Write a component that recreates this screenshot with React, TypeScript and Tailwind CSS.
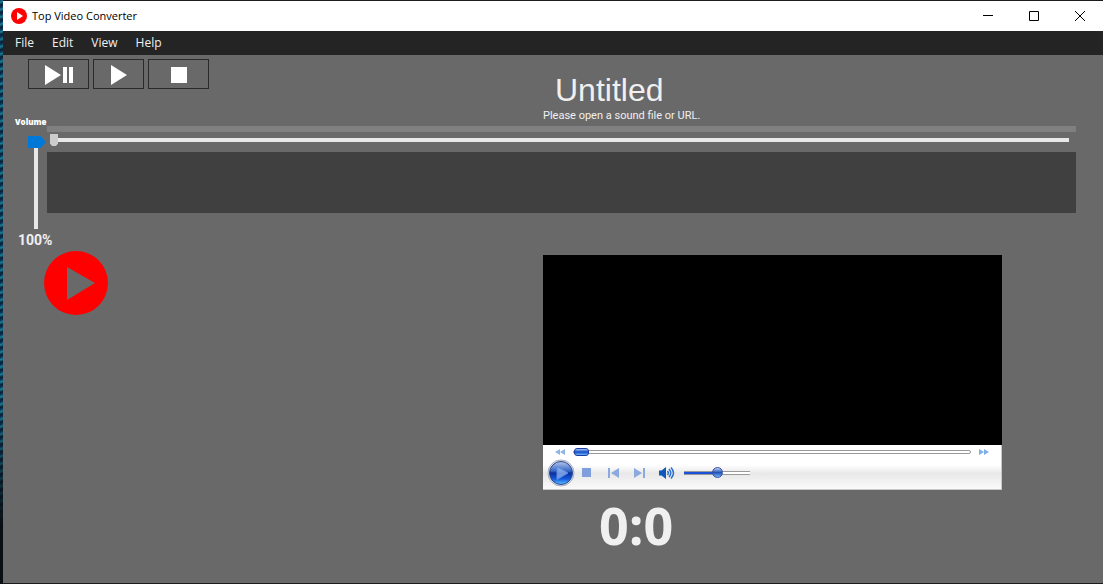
import { useState } from "react";
import type { ReactNode } from "react";

const MENU = ["File", "Edit", "View", "Help"];

export default function App() {
  return (
    <div className="flex min-h-screen flex-col bg-[#1c1c1c] bg-[linear-gradient(to_bottom,transparent_70%,#0a0f14_90%),repeating-linear-gradient(160deg,#0b2a4a_0px,#1b7f98_2px,#071a30_5px,#0d3c63_7px)] font-['Open_Sans',sans-serif]">
      <div className="ml-[3px] flex flex-1 flex-col border-y border-[#1c1c1c] bg-[#696969]">
        <TitleBar />
        <MenuBar />
        <main className="flex flex-1 flex-col">
          <Header />
          <Tracks />
          <Stage />
        </main>
      </div>
    </div>
  );
}

function TitleBar() {
  return (
    <header className="flex h-[30px] items-center bg-white pl-2 text-black">
      <svg className="h-4 w-4" viewBox="0 0 16 16">
        <circle cx="8" cy="8" r="8" fill="#f00" />
        <path d="M6 4l6 4-6 4z" fill="#fff" />
      </svg>
      <h1 className="ml-[5px] flex-1 text-[11px]">Top Video Converter</h1>
      <WindowButton label="Minimize">
        <path d="M0 4.5h10" />
      </WindowButton>
      <WindowButton label="Maximize">
        <path d="M.5 .5h9v9h-9z" />
      </WindowButton>
      <WindowButton label="Close">
        <path d="M0 0l10 10M10 0L0 10" />
      </WindowButton>
    </header>
  );
}

function WindowButton({ label, children }: { label: string; children: ReactNode }) {
  return (
    <button
      type="button"
      aria-label={label}
      className="flex h-full w-[46px] items-center justify-center pb-px hover:bg-gray-200"
    >
      <svg className="h-[10px] w-[10px]" viewBox="0 0 10 10" fill="none" stroke="#000">
        {children}
      </svg>
    </button>
  );
}

function MenuBar() {
  return (
    <nav className="flex h-6 items-center gap-[18px] bg-[#242424] pl-3 text-[12px] text-[#f0f0f0]">
      {MENU.map((item) => (
        <button key={item} type="button" className="hover:underline">
          {item}
        </button>
      ))}
    </nav>
  );
}

function Header() {
  return (
    <div className="flex h-[71px]">
      <div className="flex w-[540px] shrink-0 flex-col justify-between pt-1">
        <div className="flex h-[30px] gap-1 pl-[25px]">
          <button
            type="button"
            aria-label="Play or pause"
            className="flex w-[61px] items-center justify-center border border-[#2a2a2a] pt-0.5 hover:bg-[#777]"
          >
            <svg className="h-5 w-7" viewBox="0 0 28 20" fill="#fff">
              <path d="M0 0l16 10L0 20zM18 2h4v16h-4zM24 2h4v16h-4z" />
            </svg>
          </button>
          <button
            type="button"
            aria-label="Play"
            className="flex w-[51px] items-center justify-center border border-[#2a2a2a] pt-0.5 hover:bg-[#777]"
          >
            <svg className="h-5 w-4" viewBox="0 0 16 20" fill="#fff">
              <path d="M0 0l16 10L0 20z" />
            </svg>
          </button>
          <button
            type="button"
            aria-label="Stop"
            className="flex w-[61px] items-center justify-center border border-[#2a2a2a] pt-0.5 hover:bg-[#777]"
          >
            <span className="h-4 w-4 bg-white" />
          </button>
        </div>
        <label htmlFor="volume" className="pl-3 text-[8px] leading-[9px] font-extrabold text-white">
          Volume
        </label>
      </div>
      <div className="flex-1 pt-4 text-[#f0f0f0]">
        <h2 className="pl-3 font-['Liberation_Sans',sans-serif] text-[32px] leading-[38px]">
          Untitled
        </h2>
        <p className="font-['Roboto',sans-serif] text-[11px] leading-[14px]">
          Please open a sound file or URL.
        </p>
      </div>
    </div>
  );
}

function Tracks() {
  const [volume, setVolume] = useState(100);

  return (
    <div className="flex pr-[27px]">
      <div className="w-[44px] shrink-0 pt-[10px]">
        <input
          id="volume"
          type="range"
          value={volume}
          onChange={(e) => setVolume(Number(e.target.value))}
          className="ml-6 block h-[93px] w-[18px] appearance-none bg-transparent [direction:rtl] [writing-mode:vertical-lr] [&::-webkit-slider-runnable-track]:h-full [&::-webkit-slider-runnable-track]:w-1 [&::-webkit-slider-runnable-track]:bg-[#e8e8e8] [&::-webkit-slider-thumb]:ml-[-6px] [&::-webkit-slider-thumb]:h-3 [&::-webkit-slider-thumb]:w-[18px] [&::-webkit-slider-thumb]:appearance-none [&::-webkit-slider-thumb]:bg-[#0078d7] [&::-webkit-slider-thumb]:[clip-path:polygon(0_0,70%_0,100%_50%,70%_100%,0_100%)]"
        />
        <output
          htmlFor="volume"
          className="block pt-[3px] pl-[15px] font-['Roboto',sans-serif] text-[14px] leading-4 font-bold text-[#f0f0f0]"
        >
          {volume}%
        </output>
      </div>
      <div className="min-w-0 flex-1">
        <div className="h-[6px] bg-[#808080]" />
        <div className="mt-0.5 mb-[6px] pr-[7px] pl-[3px]">
          <input
            type="range"
            aria-label="Position"
            defaultValue={0}
            className="block h-3 w-full appearance-none bg-transparent [&::-webkit-slider-runnable-track]:h-1 [&::-webkit-slider-runnable-track]:bg-[#e8e8e8] [&::-webkit-slider-thumb]:mt-[-4px] [&::-webkit-slider-thumb]:h-3 [&::-webkit-slider-thumb]:w-2 [&::-webkit-slider-thumb]:appearance-none [&::-webkit-slider-thumb]:bg-[#ccc] [&::-webkit-slider-thumb]:[clip-path:polygon(0_0,100%_0,100%_80%,75%_100%,25%_100%,0_80%)]"
          />
        </div>
        <div className="h-[61px] bg-[#404040]" />
      </div>
    </div>
  );
}

function Stage() {
  return (
    <div className="flex pt-[3px]">
      <div className="w-[540px] shrink-0 pl-[41px]">
        <svg className="h-16 w-16" viewBox="0 0 64 64" fill="#f00">
          <path fillRule="evenodd" d="M32 0a32 32 0 1 0 0 64a32 32 0 1 0 0-64zM23 16l28 16-28 17z" />
        </svg>
      </div>
      <div className="mr-[101px] min-w-0 flex-1 pt-1">
        <Player />
        <p className="pt-1 pl-14 text-[52px] leading-[62px] font-bold text-[#f0f0f0]">0:0</p>
      </div>
    </div>
  );
}

function Player() {
  return (
    <section aria-label="Video player">
      <div className="h-[190px] bg-black" />
      <div className="flex h-[45px] flex-col border-r border-b border-[#c8c8c8] bg-linear-to-b from-white from-45% via-[#e8e8e8] via-65% to-[#fafafa]">
        <div className="flex h-[14px] shrink-0 items-center gap-2 pr-3 pl-3">
          <button type="button" aria-label="Rewind">
            <svg className="h-[6px] w-[10px]" viewBox="0 0 10 6" fill="#8fb4e6">
              <path d="M5 0v6L0 3zM10 0v6L5 3z" />
            </svg>
          </button>
          <input
            type="range"
            aria-label="Seek"
            defaultValue={0}
            className="block h-2 min-w-0 flex-1 appearance-none bg-transparent [&::-webkit-slider-runnable-track]:h-1 [&::-webkit-slider-runnable-track]:rounded-xs [&::-webkit-slider-runnable-track]:border [&::-webkit-slider-runnable-track]:border-[#999] [&::-webkit-slider-runnable-track]:bg-white [&::-webkit-slider-thumb]:mt-[-3px] [&::-webkit-slider-thumb]:h-2 [&::-webkit-slider-thumb]:w-[15px] [&::-webkit-slider-thumb]:appearance-none [&::-webkit-slider-thumb]:rounded-[3px] [&::-webkit-slider-thumb]:border [&::-webkit-slider-thumb]:border-[#1a3fa0] [&::-webkit-slider-thumb]:bg-linear-to-b [&::-webkit-slider-thumb]:from-[#a9c4f2] [&::-webkit-slider-thumb]:via-[#1448c8] [&::-webkit-slider-thumb]:to-[#6fb4f8]"
          />
          <button type="button" aria-label="Fast forward">
            <svg className="h-[6px] w-[10px]" viewBox="0 0 10 6" fill="#7fade8">
              <path d="M0 0l5 3-5 3zM5 0l5 3-5 3z" />
            </svg>
          </button>
        </div>
        <div className="flex h-[27px] items-center pl-1">
          <button type="button" aria-label="Play">
            <svg className="h-[28px] w-[28px]" viewBox="0 0 28 28">
              <defs>
                <linearGradient id="orb" x1="0" y1="0" x2="0" y2="1">
                  <stop offset="0" stopColor="#b4c6ea" />
                  <stop offset=".42" stopColor="#3566c4" />
                  <stop offset=".5" stopColor="#0b2f9c" />
                  <stop offset=".75" stopColor="#1257dc" />
                  <stop offset="1" stopColor="#5fc4ff" />
                </linearGradient>
              </defs>
              <circle cx="14" cy="14" r="13" fill="#e8ecf5" stroke="#a9adbd" />
              <circle cx="14" cy="14" r="11.5" fill="url(#orb)" stroke="#2c468c" />
              <path d="M10 7.5l11 6.5-11 6.5z" fill="#8db2ef" fillOpacity=".8" stroke="#5d8be0" />
            </svg>
          </button>
          <button type="button" aria-label="Stop" className="ml-[7px] h-[9px] w-[9px] bg-[#7e9fdc]" />
          <button type="button" aria-label="Previous" className="ml-[17px]">
            <svg className="h-[10px] w-3" viewBox="0 0 12 10" fill="#8ba9df">
              <path d="M0 0h2v10H0zM11 0v10L3 5z" />
            </svg>
          </button>
          <button type="button" aria-label="Next" className="ml-[14px]">
            <svg className="h-[10px] w-3" viewBox="0 0 12 10" fill="#8ba9df">
              <path d="M0 0l8 5-8 5zM9 0h2v10H9z" />
            </svg>
          </button>
          <button type="button" aria-label="Mute" className="ml-[13px]">
            <svg className="h-3 w-4" viewBox="0 0 16 12">
              <path d="M0 3.500h2.500L7 0v12L2.500 8.500H0z" fill="#1159b8" />
              <path
                d="M8.500 4q1.500 2 0 4M10 2q3.500 4 0 8M12 .5q5 5.500 0 11"
                fill="none"
                stroke="#2a70cc"
                strokeWidth="1.500"
              />
            </svg>
          </button>
          <input
            type="range"
            aria-label="Player volume"
            defaultValue={50}
            className="ml-[9px] block h-[11px] w-[66px] appearance-none bg-transparent [&::-webkit-slider-runnable-track]:h-1 [&::-webkit-slider-runnable-track]:border-y [&::-webkit-slider-runnable-track]:border-[#999] [&::-webkit-slider-runnable-track]:bg-linear-to-r [&::-webkit-slider-runnable-track]:from-[#1d50d8] [&::-webkit-slider-runnable-track]:from-50% [&::-webkit-slider-runnable-track]:to-white [&::-webkit-slider-runnable-track]:to-50% [&::-webkit-slider-thumb]:mt-[-5px] [&::-webkit-slider-thumb]:h-[11px] [&::-webkit-slider-thumb]:w-[11px] [&::-webkit-slider-thumb]:appearance-none [&::-webkit-slider-thumb]:rounded-full [&::-webkit-slider-thumb]:border [&::-webkit-slider-thumb]:border-[#3a4fa0] [&::-webkit-slider-thumb]:bg-linear-to-b [&::-webkit-slider-thumb]:from-[#c3d2f2] [&::-webkit-slider-thumb]:via-[#2450b8] [&::-webkit-slider-thumb]:to-[#6fb4f8]"
          />
        </div>
      </div>
    </section>
  );
}
